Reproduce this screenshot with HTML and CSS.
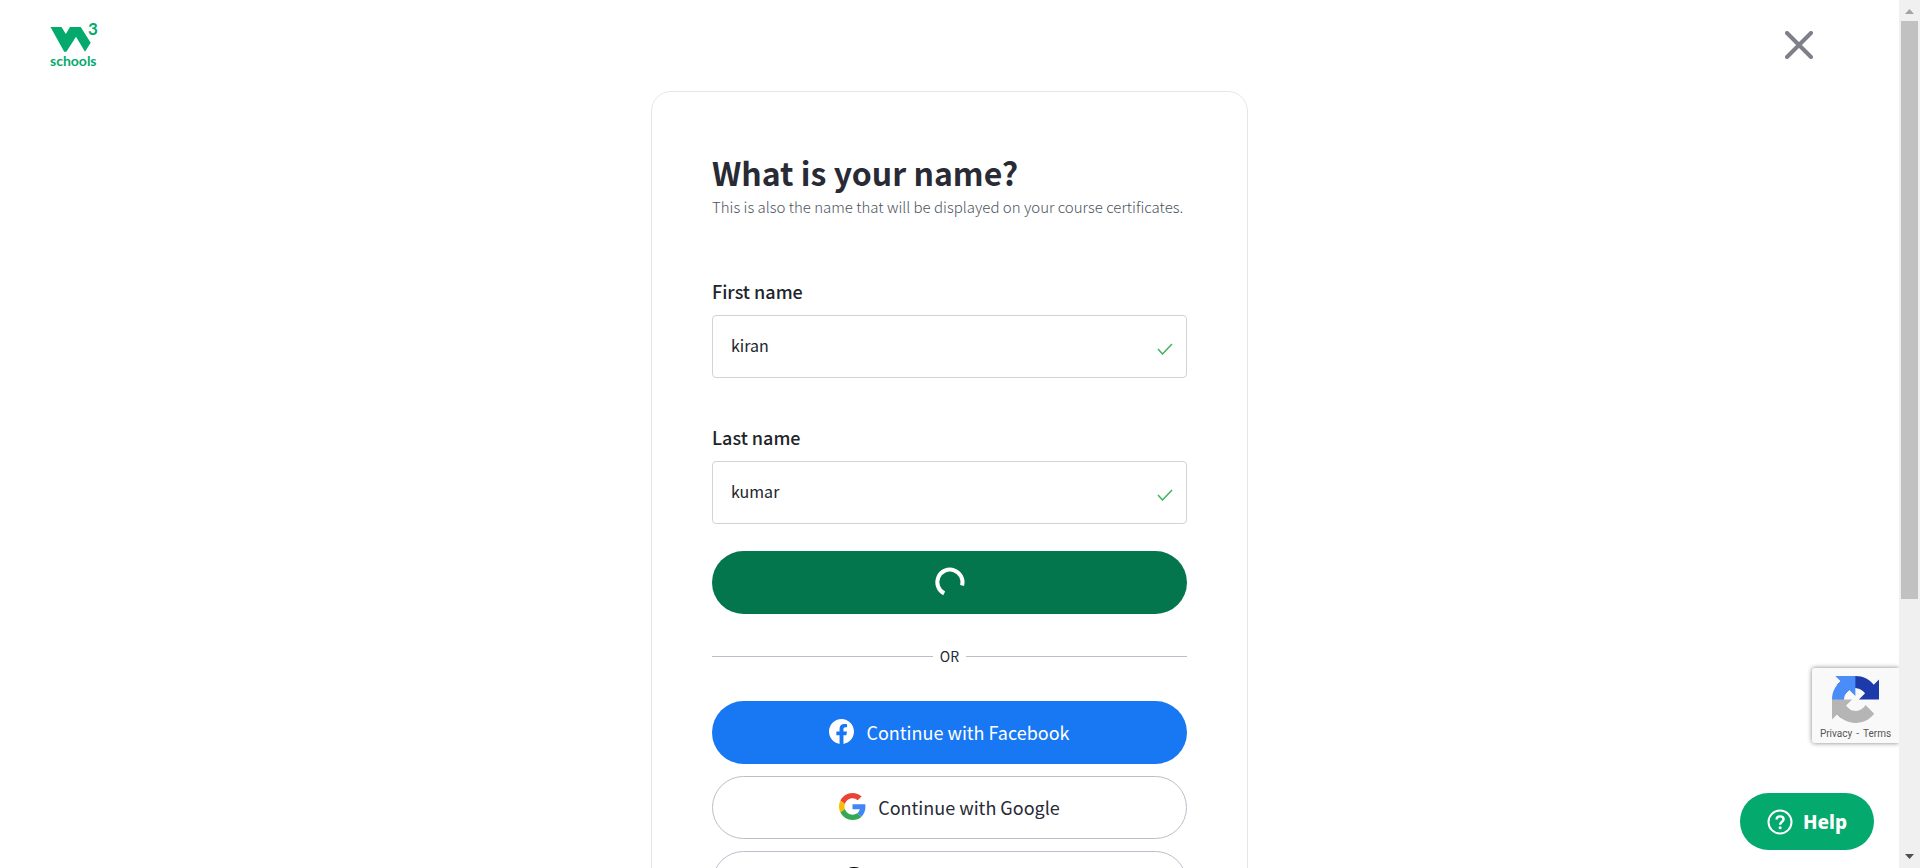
FILE: index.html
```html
<!DOCTYPE html>
<html lang="en">
<head>
<meta charset="utf-8">
<title>W3Schools - Sign up</title>
<link rel="stylesheet" href="styles.css">
</head>
<body>
<div class="page">
  <header class="header">
    <a class="logo" href="#" aria-label="W3Schools home">
      <svg class="logo-mark" viewBox="0 0 52 50" width="52" height="50" aria-hidden="true">
        <path fill="#04aa6d" d="M1.500 7H12.500l4.300 7L21 7H31.700l10 15.700-5.700 9-9-15-9.600 15h-2.200z"/>
        <text class="logo-text logo-three" x="39" y="15">3</text>
        <text class="logo-text" x="1" y="46">schools</text>
      </svg>
    </a>
    <button class="close" type="button" aria-label="Close">
      <svg viewBox="0 0 28 28" width="28" height="28" aria-hidden="true"><path d="M2 2l24 24M26 2L2 26" stroke="#7f7f89" stroke-width="4" stroke-linecap="round"/></svg>
    </button>
  </header>

  <main class="card">
    <h1 class="title">What is your name?</h1>
    <p class="subtitle">This is also the name that will be displayed on your course certificates.</p>
    <form class="form">
      <div class="field">
        <label class="label" for="first">First name</label>
        <div class="control">
          <input class="input" id="first" type="text" value="kiran">
          <svg class="check" viewBox="0 0 16 12" width="16" height="12" aria-hidden="true"><path d="M1 6l4.500 5L15 1"/></svg>
        </div>
      </div>
      <div class="field">
        <label class="label" for="last">Last name</label>
        <div class="control">
          <input class="input" id="last" type="text" value="kumar">
          <svg class="check" viewBox="0 0 16 12" width="16" height="12" aria-hidden="true"><path d="M1 6l4.500 5L15 1"/></svg>
        </div>
      </div>
      <button class="button submit" type="submit" aria-label="Continue">
        <svg viewBox="0 0 32 32" width="32" height="32" aria-hidden="true"><path d="M10.200 27.400A12.600 12.600 0 1 1 28.100 19.500" fill="none" stroke="#fff" stroke-width="4"/></svg>
      </button>
    </form>
    <div class="divider">OR</div>
    <div class="socials">
      <button class="button facebook" type="button">
        <svg viewBox="0 0 24 24" width="25" height="25" aria-hidden="true"><path fill="#fff" d="M24 12.073c0-6.627-5.373-12-12-12s-12 5.373-12 12c0 5.990 4.388 10.954 10.125 11.854v-8.385H7.078v-3.470h3.047V9.430c0-3.007 1.792-4.669 4.533-4.669 1.312 0 2.686.235 2.686.235v2.953H15.830c-1.491 0-1.956.925-1.956 1.874v2.250h3.328l-.532 3.470h-2.796v8.385C19.612 23.027 24 18.062 24 12.073z"/></svg>
        Continue with Facebook
      </button>
      <button class="button outline" type="button">
        <svg viewBox="0 0 48 48" width="27" height="27" aria-hidden="true"><path fill="#ea4335" d="M24 9.500c3.540 0 6.710 1.220 9.210 3.600l6.850-6.850C35.900 2.380 30.470 0 24 0 14.620 0 6.510 5.380 2.560 13.220l7.980 6.190C12.430 13.720 17.740 9.500 24 9.500z"/><path fill="#4285f4" d="M46.980 24.550c0-1.570-.15-3.090-.38-4.550H24v9.020h12.940c-.58 2.960-2.260 5.480-4.780 7.180l7.730 6c4.510-4.180 7.090-10.360 7.090-17.650z"/><path fill="#fbbc05" d="M10.530 28.590c-.48-1.450-.76-2.990-.76-4.590s.27-3.140.76-4.590l-7.980-6.190C.92 16.460 0 20.120 0 24c0 3.880.92 7.540 2.560 10.780l7.970-6.190z"/><path fill="#34a853" d="M24 48c6.480 0 11.930-2.130 15.890-5.810l-7.730-6c-2.150 1.450-4.920 2.300-8.160 2.300-6.260 0-11.570-4.220-13.470-9.910l-7.980 6.190C6.510 42.620 14.620 48 24 48z"/></svg>
        Continue with Google
      </button>
      <button class="button outline" type="button">
        <svg viewBox="0 0 16 16" width="30" height="30" aria-hidden="true"><path d="M8 0C3.580 0 0 3.580 0 8c0 3.540 2.290 6.530 5.470 7.590.4.070.55-.17.55-.38v-1.490c-2.010.37-2.530-.49-2.690-.94-.09-.23-.48-.94-.82-1.130-.28-.15-.68-.52-.01-.53.63-.01 1.080.58 1.230.82.72 1.210 1.870.87 2.330.66.070-.52.28-.87.51-1.070-1.780-.2-3.640-.89-3.640-3.950 0-.87.31-1.590.82-2.150-.08-.2-.36-1.020.08-2.120 0 0 .67-.21 2.200.82a7.600 7.600 0 0 1 4 0c1.530-1.040 2.200-.82 2.200-.82.44 1.100.16 1.920.08 2.120.51.56.82 1.270.82 2.150 0 3.070-1.870 3.750-3.650 3.950.29.25.54.73.54 1.480v2.200c0 .21.15.46.55.38A8 8 0 0 0 16 8c0-4.420-3.580-8-8-8z"/></svg>
        Continue with Github
      </button>
    </div>
  </main>

  <aside class="captcha">
    <svg viewBox="0 0 64 64" width="47" height="47" aria-hidden="true"><path fill="#1c3aa9" d="M64 31.955a33.500 33.500 0 0 0-.03-1.370V4.687l-7.160 7.160C50.948 4.674 42.033.093 32.050.093c-10.400 0-19.622 4.960-25.458 12.640l11.736 11.860a15.550 15.550 0 0 1 4.754-5.334c2.050-1.600 4.952-2.906 8.968-2.906.485 0 .86.057 1.135.163 4.976.393 9.288 3.140 11.828 7.124l-8.307 8.307L64 31.953"/><path fill="#4b8df8" d="M31.862.094a33.500 33.500 0 0 0-1.370.03H4.594l7.160 7.160C4.580 13.147 0 22.060 0 32.046c0 10.400 4.960 19.622 12.640 25.458L24.500 45.768a15.550 15.550 0 0 1-5.334-4.754c-1.600-2.050-2.906-4.952-2.906-8.968 0-.485.057-.86.163-1.135.393-4.976 3.140-9.288 7.124-11.828l8.307 8.307L31.860.095"/><path fill="#b5b5b5" d="M.001 32.045a33.500 33.500 0 0 0 .03 1.370v25.900l7.160-7.160c5.863 7.174 14.777 11.753 24.760 11.753 10.400 0 19.622-4.960 25.458-12.640L45.673 39.410a15.550 15.550 0 0 1-4.754 5.334c-2.050 1.600-4.952 2.906-8.968 2.906-.485 0-.86-.057-1.135-.163-4.976-.393-9.288-3.140-11.828-7.124l8.307-8.307-27.293-.01"/></svg>
    <div class="captcha-links"><a href="#">Privacy</a><span>-</span><a href="#">Terms</a></div>
  </aside>
  <button class="help" type="button">
    <svg viewBox="0 0 26 26" width="26" height="26" fill="none" stroke="#fff" stroke-width="2" aria-hidden="true"><circle cx="13" cy="13" r="11.500"/><path stroke-width="2.400" d="M9.600 10.500c0-4.200 7-4 7-.2 0 2.400-3.500 2.600-3.500 5.400"/><circle cx="13.100" cy="18.700" r="1.500" fill="#fff" stroke="none"/></svg>
    Help
  </button>
</div>
<div class="scrollbar" aria-hidden="true">
  <svg viewBox="0 0 21 21" width="21" height="21"><path fill="#a3a3a3" d="M6 14l4.500-5 4.500 5z"/></svg>
  <div class="track"><div class="thumb"></div></div>
  <svg viewBox="0 0 21 21" width="21" height="21"><path fill="#505050" d="M6 7l4.500 5L15 7z"/></svg>
</div>
</body>
</html>
```
FILE: styles.css
```css
* { box-sizing: border-box; }
body {
  margin: 0;
  display: flex;
  height: 100vh;
  overflow: hidden;
  background: #fff;
  color: #282a35;
  font-family: "Noto Sans CJK SC", "Noto Sans", sans-serif;
}
button, input { font-family: inherit; }
.page { position: relative; flex: 1; overflow: hidden; }
.header {
  display: flex;
  align-items: center;
  justify-content: space-between;
  height: 91px;
  padding: 0 86px 2px 49px;
}
.logo, .logo-mark, .close svg { display: block; }
.logo-mark { overflow: visible; }
.logo-text { font: 700 14px Lato, sans-serif; fill: #04aa6d; }
.logo-three { font-size: 17px; }
.close { padding: 0; border: 0; background: none; cursor: pointer; }
.card {
  max-width: 597px;
  margin: 0 auto;
  padding: 58px 60px;
  border: 1px solid #e6e6e6;
  border-radius: 20px;
}
.title { margin: 0 0 1px; font-size: 32px; line-height: 44px; font-weight: 700; }
.subtitle { margin: 0; font-size: 15px; line-height: 24px; font-weight: 300; color: #4c555e; white-space: nowrap; }
.form { margin-top: 60px; }
.field { margin-bottom: 47px; }
.field:nth-child(2) { margin-bottom: 27px; }
.label { display: block; margin-bottom: 12px; font-size: 18px; line-height: 24px; font-weight: 500; color: #212529; }
.control { position: relative; }
.input {
  display: block;
  width: 100%;
  height: 63px;
  padding: 0 18px 4px;
  border: 1px solid #ced4da;
  border-radius: 4px;
  background: #fff;
  color: #212529;
  font-size: 16px;
}
.check { position: absolute; right: 14px; top: 28px; fill: none; stroke: #3eb559; stroke-width: 1.500; }
.button {
  display: flex;
  align-items: center;
  justify-content: center;
  gap: 12px;
  width: 100%;
  height: 63px;
  padding: 0 0 2px;
  border: 0;
  border-radius: 32px;
  font-size: 18px;
  cursor: pointer;
}
.submit { background: #04764e; }
.divider { display: flex; align-items: center; gap: 7px; margin: 32px 0 35px; font-size: 14px; line-height: 20px; }
.divider::before, .divider::after { content: ""; flex: 1; border-top: 1px solid #b9bfc8; }
.socials { display: flex; flex-direction: column; gap: 12px; }
.facebook { background: #1877f2; color: #fff; }
.outline { border: 1px solid #b9bfc8; background: #fff; color: #282a35; }
.captcha {
  position: absolute;
  right: 0;
  bottom: 125px;
  width: 87px;
  height: 75px;
  padding-top: 8px;
  border-radius: 3px 0 0 3px;
  background: #f9f9f9;
  box-shadow: 0 0 5px #808080;
}
.captcha svg { display: block; margin: 0 auto; }
.captcha-links { display: flex; justify-content: center; gap: 4px; margin-top: 4px; font: 10px/14px Roboto, sans-serif; color: #555; }
.captcha-links a { color: inherit; text-decoration: none; }
.help {
  position: absolute;
  right: 25px;
  bottom: 18px;
  display: flex;
  align-items: center;
  justify-content: center;
  gap: 10px;
  width: 134px;
  height: 57px;
  padding: 0;
  border: 0;
  border-radius: 29px;
  background: #04aa6d;
  color: #fff;
  font: 800 19px "Noto Sans", sans-serif;
  cursor: pointer;
}
.scrollbar { display: flex; flex-direction: column; width: 21px; background: #f0f0f0; }
.scrollbar svg { display: block; }
.track { flex: 1; padding: 0 2px; }
.thumb { height: 70%; background: #c1c1c1; }
```
